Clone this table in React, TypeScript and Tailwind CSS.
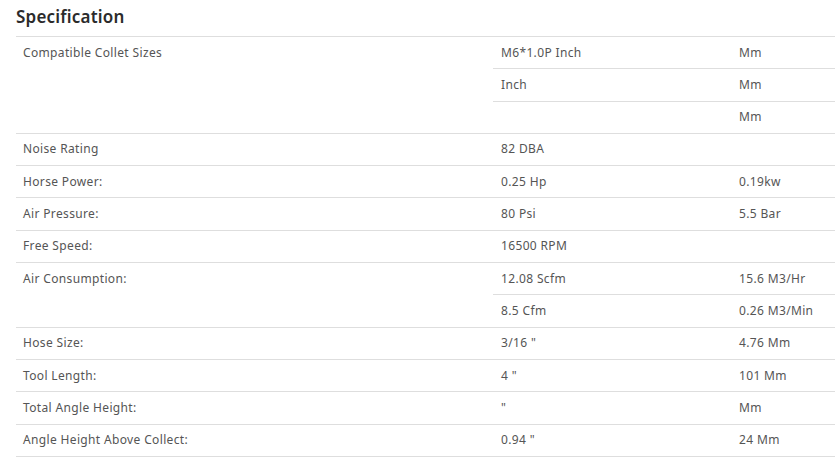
type Row = { label?: string; span?: number; a: string; b: string };

const rows: Row[] = [
  { label: "Compatible Collet Sizes", span: 3, a: "M6*1.0P Inch", b: "Mm" },
  { a: "Inch", b: "Mm" },
  { a: "", b: "Mm" },
  { label: "Noise Rating", a: "82 DBA", b: "" },
  { label: "Horse Power:", a: "0.25 Hp", b: "0.19kw" },
  { label: "Air Pressure:", a: "80 Psi", b: "5.5 Bar" },
  { label: "Free Speed:", a: "16500 RPM", b: "" },
  { label: "Air Consumption:", span: 2, a: "12.08 Scfm", b: "15.6 M3/Hr" },
  { a: "8.5 Cfm", b: "0.26 M3/Min" },
  { label: "Hose Size:", a: "3/16 \"", b: "4.76 Mm" },
  { label: "Tool Length:", a: "4 \"", b: "101 Mm" },
  { label: "Total Angle Height:", a: "\"", b: "Mm" },
  { label: "Angle Height Above Collect:", a: "0.94 \"", b: "24 Mm" },
];

const cell = "border-y border-[#dedede] h-[32.3px] align-top pt-[7.6px] pb-0 leading-[16px]";

export default function App() {
  return (
    <div className="bg-white w-[835px] h-[463px] overflow-hidden pl-4" style={{ fontFamily: "'Noto Sans', 'Open Sans', sans-serif" }}>
      <h2 className="text-[17px] font-semibold text-[#2b2b2b] pt-[6px] h-[36px] leading-[22px] tracking-[0.2px]">Specification</h2>
      <table className="w-[819px] border-collapse table-fixed text-[12px] text-[#555] tracking-[0.35px]">
        <colgroup>
          <col className="w-[477px]" />
          <col className="w-[238px]" />
          <col className="w-[104px]" />
        </colgroup>
        <tbody>
          {rows.map((r, i) => (
            <tr key={i}>
              {r.label !== undefined && (
                <td rowSpan={r.span ?? 1} className={`${cell} pl-[7px]`}>{r.label}</td>
              )}
              <td className={`${cell} pl-2`}>{r.a}</td>
              <td className={`${cell} pl-2 whitespace-nowrap`}>{r.b}</td>
            </tr>
          ))}
        </tbody>
      </table>
    </div>
  );
}
